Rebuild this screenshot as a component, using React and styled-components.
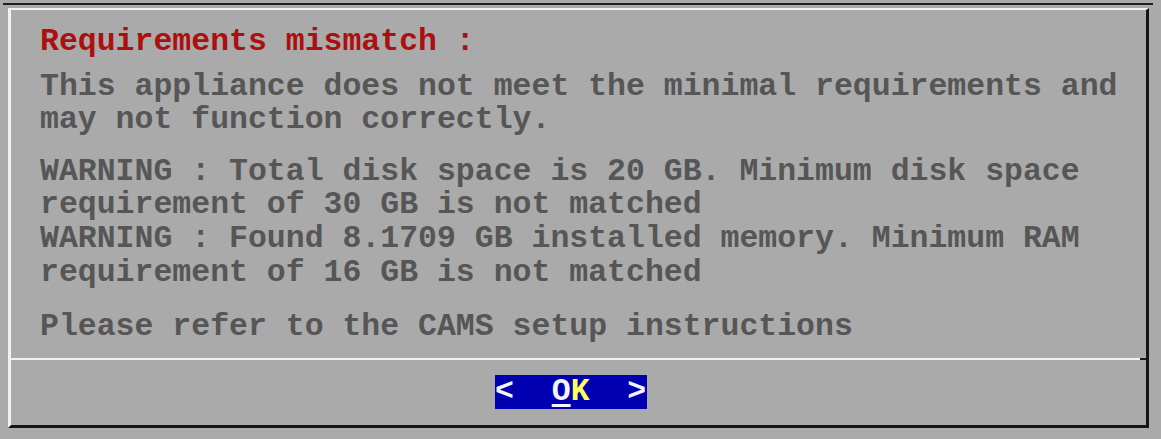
import React from 'react';
import styled, { createGlobalStyle } from 'styled-components';

const GlobalStyle = createGlobalStyle`
  html, body {
    margin: 0;
    padding: 0;
    background-color: #aaaaaa;
  }
  * {
    box-sizing: border-box;
  }
`;

const Screen = styled.div`
  width: 1161px;
  height: 439px;
  padding-top: 3px;
  background-color: #aaaaaa;
  font-family: "Liberation Mono", "DejaVu Sans Mono", monospace;
  font-weight: 700;
  font-size: 31.5px;
  line-height: 33.6px;
  overflow: hidden;
`;

const Monitor = styled.div`
  margin: 0 8px 0 3px;
  border-top: 2px solid #1e1e1e;
  padding: 3px 4px 0 5px;
`;

const Dialog = styled.div`
  height: 420px;
  border-top: 2px solid #f2f2f2;
  border-left: 3px solid #f2f2f2;
  border-right: 3px solid #151515;
  border-bottom: 3px solid #151515;
  display: flex;
  flex-direction: column;
`;

const Body = styled.div`
  position: relative;
  height: 350px;
  padding: 15px 0 0 29px;
  border-bottom: 2px solid #f2f2f2;

  &::after {
    content: '';
    position: absolute;
    right: 0;
    bottom: -2px;
    width: 6px;
    height: 2px;
    background-color: #1a1a1a;
  }
`;

const Block = styled.div`
  margin-top: ${p => p.$gap || 0}px;
  color: ${p => (p.$title ? '#ad0f0f' : '#565656')};
  white-space: pre;
`;

const Footer = styled.div`
  display: flex;
  padding: 15px 0 0 484px;
`;

const OkButton = styled.div`
  width: 152px;
  height: 34px;
  line-height: 34px;
  background-color: #0000b0;
  color: #f4f4ff;
  white-space: pre;
`;

const Hotkey = styled.span`
  text-decoration: underline;
  text-decoration-thickness: 3px;
  text-underline-offset: 4px;
`;

const Accent = styled.span`
  color: #ffff55;
`;

const App = () => (
  <>
    <GlobalStyle />
    <Screen>
      <Monitor>
        <Dialog>
          <Body>
            <Block $title>Requirements mismatch :</Block>
            <Block $gap={11}>
              {'This appliance does not meet the minimal requirements and\nmay not function correctly.'}
            </Block>
            <Block $gap={18}>
              {'WARNING : Total disk space is 20 GB. Minimum disk space\nrequirement of 30 GB is not matched\nWARNING : Found 8.1709 GB installed memory. Minimum RAM\nrequirement of 16 GB is not matched'}
            </Block>
            <Block $gap={21}>Please refer to the CAMS setup instructions</Block>
          </Body>
          <Footer>
            <OkButton>
              {'<  '}
              <Hotkey>O</Hotkey>
              <Accent>K</Accent>
              {'  >'}
            </OkButton>
          </Footer>
        </Dialog>
      </Monitor>
    </Screen>
  </>
);

export default App;
